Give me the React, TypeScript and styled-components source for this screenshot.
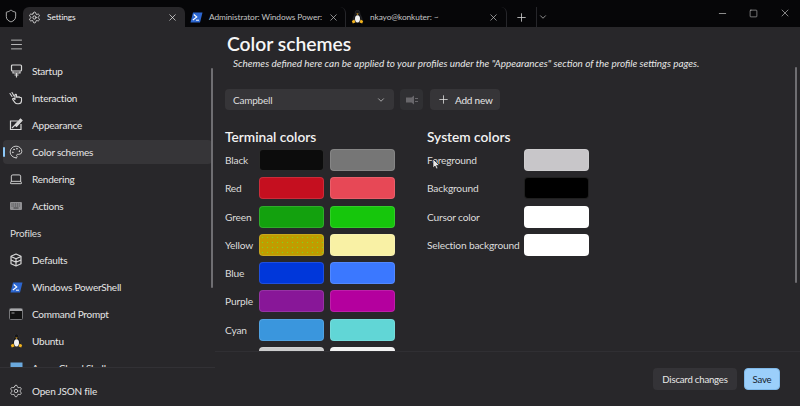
import React from "react";
import styled, { createGlobalStyle } from "styled-components";
import { ChevronDown, Laptop, Menu, Minus, Palette, Plus, Settings, Shield, Square, X } from "lucide-react";

const Global = createGlobalStyle`
  html, body { margin: 0; padding: 0; background: #28272a; }
  #root { width: 800px; height: 406px; }
  * { box-sizing: border-box; }
`;

const Page = styled.div`
  width: 800px; height: 406px; display: flex; flex-direction: column; overflow: hidden; position: relative;
  background: #28272a; color: #e4e4e4; font-family: Lato, "Noto Sans", sans-serif; font-size: 10px; letter-spacing: -0.22px;
`;
const TitleBar = styled.header`
  height: 27px; flex: none; display: flex; background: #060608;
`;
const ShieldSlot = styled.div`
  width: 23px; padding-top: 9px; padding-left: 4px; color: #cfcfcf; display: flex; align-items: flex-start;
`;
const Tabs = styled.div`
  display: flex; align-items: flex-end; height: 27px;
`;
const Tab = styled.div<{ $active?: boolean }>`
  width: ${p => (p.$active ? 162 : 161)}px; height: 20px; display: flex; align-items: center; padding: 0 7px 0 5px; gap: 6px;
  background: ${p => (p.$active ? "#28272a" : "transparent")}; border-radius: 6px 6px 0 0;
  color: ${p => (p.$active ? "#f0f0f0" : "#c4c4c4")};
  border-right: ${p => (p.$active ? "none" : "1px solid #26262a")};
  svg { flex: none; }
`;
const TabText = styled.span`
  flex: 1; white-space: nowrap; font-size: 8.3px; letter-spacing: -0.1px;
`;
const TabAction = styled.div<{ $divider?: boolean }>`
  height: 20px; display: flex; align-items: center; justify-content: center; width: ${p => (p.$divider ? 30 : 12)}px; color: #d0d0d0;
  border-right: ${p => (p.$divider ? "1px solid #26262a" : "none")};
`;
const WindowControls = styled.div`
  margin-left: auto; display: flex; height: 27px; color: #d6d6d6;
`;
const WindowButton = styled.div`
  width: 31px; height: 26px; display: flex; align-items: center; justify-content: center;
`;
const Body = styled.div`
  flex: 1; display: flex; min-height: 0;
`;
const Sidebar = styled.nav`
  width: 215px; flex: none; display: flex; flex-direction: column; position: relative;
`;
const NavList = styled.div`
  height: 340px; flex: none; overflow: hidden; padding: 5px 3px 0; display: flex; flex-direction: column; gap: 3px;
`;
const NavItem = styled.div<{ $active?: boolean }>`
  height: 24px; flex: none; display: flex; align-items: center; gap: 8px; padding-left: 5px; border-radius: 4px; position: relative; width: 209px;
  background: ${p => (p.$active ? "#363538" : "transparent")}; color: #e6e6e6; white-space: nowrap;
  svg { flex: none; }
  &::before {
    content: ""; display: ${p => (p.$active ? "block" : "none")}; position: absolute; left: 0; top: 7px; width: 2px; height: 10px; border-radius: 1px; background: #8cc8f8;
  }
`;
const IconSlot = styled.span`
  width: 16px; height: 16px; flex: none; display: flex; align-items: center; justify-content: center; color: #d8d8d8;
`;
const SectionLabel = styled.div`
  height: 24px; flex: none; display: flex; align-items: center; padding-left: 7px; color: #dcdcdc;
`;
const SideFooter = styled.div`
  border-top: 1px solid #323135; padding: 11px 3px 0;
`;
const ScrollThumb = styled.div<{ $top: number; $height: number; $left: number }>`
  position: absolute; left: ${p => p.$left}px; top: ${p => p.$top}px; width: 2px; height: ${p => p.$height}px; border-radius: 1px; background: #6f6e72;
`;
const Main = styled.main`
  flex: 1; display: flex; flex-direction: column; min-width: 0;
`;
const Content = styled.div`
  height: 325px; flex: none; overflow: hidden; padding: 5px 0 0 10px; border-bottom: 1px solid #302f33;
`;
const Title = styled.h1`
  margin: 0 0 0 2px; font-size: 19.3px; line-height: 24px; font-weight: 600; letter-spacing: 0; color: #f6f6f6;
`;
const Subtitle = styled.p`
  margin: 0 0 0 8px; font-size: 9.95px; line-height: 14px; font-style: italic; letter-spacing: 0; color: #e6e6e6; white-space: nowrap;
`;
const Toolbar = styled.div`
  display: flex; margin-top: 19px; height: 21px; gap: 6px;
`;
const Combo = styled.div`
  width: 169px; display: flex; align-items: center; justify-content: space-between; padding: 0 8px; background: #363538; border-radius: 4px; color: #dedede;
`;
const IconButton = styled.div`
  width: 23px; display: flex; align-items: center; justify-content: center; background: #303033; border-radius: 4px; color: #68676b;
`;
const AddButton = styled.div`
  width: 70px; margin-left: 1px; display: flex; align-items: center; gap: 5px; padding-left: 7px; background: #363538; border-radius: 4px; color: #e6e6e6;
`;
const Columns = styled.div`
  display: flex; gap: 32px; margin-top: 18px;
`;
const Column = styled.section`
  display: flex; flex-direction: column;
`;
const ColumnTitle = styled.h2`
  margin: 0 0 3px; font-size: 13.7px; line-height: 18px; font-weight: 600; letter-spacing: 0; color: #f2f2f2;
`;
const SwatchGrid = styled.div<{ $cols: string }>`
  display: grid; grid-template-columns: ${p => p.$cols}; column-gap: 6px; row-gap: 6.3px; align-items: center;
`;
const RowLabel = styled.span`
  font-size: 10.2px; letter-spacing: -0.18px; color: #dcdcdc; white-space: nowrap; margin-right: -6px;
`;
const Swatch = styled.div<{ $color: string; $speck?: string }>`
  width: 65px; height: 22px; border-radius: 4px; border: 1px solid rgba(255,255,255,0.12);
  background-color: ${p => p.$color};
  background-image: ${p => (p.$speck ? `radial-gradient(${p.$speck} 0.6px, transparent 0.9px)` : "none")};
  background-size: 5px 5px;
`;
const Footer = styled.footer`
  flex: 1; display: flex; justify-content: flex-end; align-items: flex-start; gap: 7px; padding: 16px 20px 0 0;
`;
const Discard = styled.button`
  width: 84px; height: 22px; border: none; border-radius: 4px; background: #343337; color: #e8e8e8; font: inherit; letter-spacing: -0.2px; font-size: 9.6px; padding: 0;
`;
const Save = styled.button`
  width: 36px; height: 22px; border: 1px solid #7fb8e8; border-radius: 4px; background: #9bcffb; color: #14202c; font: inherit; letter-spacing: -0.2px; font-size: 9.6px; padding: 0;
`;
const Pointer = styled.svg`
  position: absolute; left: 432px; top: 159px;
`;

const StartupIcon = () => (
  <svg width="13" height="14" viewBox="0 0 13 14" fill="none" stroke="currentColor" strokeWidth="1.2">
    <rect x="1.5" y="1" width="10" height="6" rx="1" />
    <path d="M3 7.5v1.5h7V7.5M6.5 9v4.5M4.5 11h4" />
  </svg>
);
const HandIcon = () => (
  <svg width="14" height="14" viewBox="0 0 14 14" fill="none" stroke="currentColor" strokeWidth="1.1" strokeLinecap="round" strokeLinejoin="round">
    <path d="M1 2.500l2 3M3 1.500l2 3.500M6 4v4.500L4.800 7.500c-.8-.5-1.700.3-1 1.200L6 11.600c.6.8 1.400 1.200 2.500 1.200h1c1.700 0 3-1.300 3-3V7.500c0-.9-.9-1.300-1.500-.8-.2-1-1.500-1.200-2-.3-.3-.7-1.200-.7-1.500-.2V4c0-1-1.500-1-1.500 0z" />
  </svg>
);
const AppearanceIcon = () => (
  <svg width="14" height="14" viewBox="0 0 14 14" fill="none" stroke="currentColor" strokeWidth="1.2">
    <path d="M9 3H1.500v8.500H12V6" />
    <path d="M3 10l3-3 1.500 1.500L13 2.500 11.500 1 6 7" fill="currentColor" />
  </svg>
);
const KeyboardIcon = () => (
  <svg width="14" height="12" viewBox="0 0 14 12">
    <rect x="1" y="2" width="12" height="8" rx="1" fill="#8f8f92" />
    <path d="M2.500 4h9M2.500 6h9" stroke="#3a3a3d" strokeWidth="0.9" strokeDasharray="1 .8" />
    <path d="M4.500 8h5" stroke="#3a3a3d" strokeWidth="1" />
  </svg>
);
const DefaultsIcon = () => (
  <svg width="14" height="14" viewBox="0 0 14 14" fill="none" stroke="currentColor" strokeWidth="1.2" strokeLinejoin="round">
    <path d="M7 1l5 2.200v7.600L7 13l-5-2.200V3.200z" />
    <path d="M2 3.500l5 2.200 5-2.200M2 7l5 2.200L12 7M7 5.700V13" />
  </svg>
);
const PowerShellIcon = () => (
  <svg width="13" height="11" viewBox="0 0 13 11">
    <path d="M3 .5h9.500L10 10.500H.5z" fill="#2c66cf" />
    <path d="M3.800 2.500L6.800 5 2.800 8" fill="none" stroke="#fff" strokeWidth="1.100" />
    <path d="M6 8.200h3" stroke="#fff" strokeWidth="1" />
  </svg>
);
const CmdIcon = () => (
  <svg width="14" height="12" viewBox="0 0 14 12">
    <rect x=".5" y=".5" width="13" height="11" rx="1" fill="#111" stroke="#77777a" />
    <rect x="1" y="1" width="12" height="2" fill="#a8a8ab" />
    <path d="M2.500 5h3" stroke="#bbb" strokeWidth=".8" />
  </svg>
);
const Penguin = () => (
  <svg width="13" height="14" viewBox="0 0 13 14">
    <path d="M6.500 0C4.800 0 4.300 1.500 4.300 3c0 1.500-2.300 4-2.300 6.500 0 1.500 2 3 4.500 3s4.500-1.500 4.500-3C11 7 8.700 4.500 8.700 3 8.700 1.500 8.200 0 6.500 0z" fill="#17171a" stroke="#55555a" strokeWidth=".3" />
    <ellipse cx="6.500" cy="8.800" rx="2.500" ry="3.600" fill="#f1f1f1" />
    <path d="M5.300 3.600h2.400L6.500 4.900z" fill="#f0b020" />
    <path d="M.8 11l2.600-1.400 1 2.900-2.600 1zM12.200 11L9.600 9.600l-1 2.900 2.600 1z" fill="#f2b31d" />
  </svg>
);
const CloudIcon = () => (
  <svg width="13" height="12" viewBox="0 0 13 12">
    <rect x=".5" y=".5" width="12" height="11" fill="#6aa8dc" />
  </svg>
);
const SpeakerIcon = () => (
  <svg width="12" height="10" viewBox="0 0 12 10" fill="currentColor">
    <path d="M0 2.500h5.500L8 .5v9L5.500 7.500H0z" />
    <path d="M9 3h3v1H9zM9 6h3v1H9z" />
  </svg>
);

const nav: [string, React.ReactNode][] = [
  ["Startup", <StartupIcon />],
  ["Interaction", <HandIcon />],
  ["Appearance", <AppearanceIcon />],
];
const nav2: [string, React.ReactNode][] = [
  ["Rendering", <Laptop size={14} strokeWidth={1.6} />],
  ["Actions", <KeyboardIcon />],
];
const profiles: [string, React.ReactNode][] = [
  ["Defaults", <DefaultsIcon />],
  ["Windows PowerShell", <PowerShellIcon />],
  ["Command Prompt", <CmdIcon />],
  ["Ubuntu", <Penguin />],
  ["Azure Cloud Shell", <CloudIcon />],
];
const terminal: [string, string, string, string?][] = [
  ["Black", "#0c0c0c", "#767676"],
  ["Red", "#c50f1f", "#e74856"],
  ["Green", "#13a10e", "#16c60c"],
  ["Yellow", "#c19c00", "#f9f1a5", "#7fd81c"],
  ["Blue", "#0037da", "#3b78ff"],
  ["Purple", "#881798", "#b4009e"],
  ["Cyan", "#3a96dd", "#61d6d6"],
  ["White", "#cccccc", "#f2f2f2"],
];
const system: [string, string][] = [
  ["Foreground", "#c8c6c9"],
  ["Background", "#000000"],
  ["Cursor color", "#ffffff"],
  ["Selection background", "#ffffff"],
];

const NavRow = ({ label, icon, active }: { label: string; icon: React.ReactNode; active?: boolean }) => (
  <NavItem $active={active}>
    <IconSlot>{icon}</IconSlot>
    {label}
  </NavItem>
);

export default function App() {
  return (
    <Page>
      <Global />
      <TitleBar>
        <ShieldSlot><Shield size={14} strokeWidth={1.4} /></ShieldSlot>
        <Tabs>
          <Tab $active>
            <Settings size={13} strokeWidth={1.5} />
            <TabText>Settings</TabText>
            <X size={11} strokeWidth={1.5} />
          </Tab>
          <Tab>
            <PowerShellIcon />
            <TabText>Administrator: Windows Power:</TabText>
            <X size={11} strokeWidth={1.5} />
          </Tab>
          <Tab>
            <Penguin />
            <TabText>nkayo@konkuter: ~</TabText>
            <X size={11} strokeWidth={1.5} />
          </Tab>
          <TabAction $divider><Plus size={13} strokeWidth={1.5} /></TabAction>
          <TabAction><ChevronDown size={10} strokeWidth={1.6} /></TabAction>
        </Tabs>
        <WindowControls>
          <WindowButton><Minus size={11} strokeWidth={1.4} /></WindowButton>
          <WindowButton><Square size={9} strokeWidth={1.4} /></WindowButton>
          <WindowButton><X size={12} strokeWidth={1.2} /></WindowButton>
        </WindowControls>
      </TitleBar>
      <Body>
        <Sidebar>
          <NavList>
            <NavItem><IconSlot><Menu size={15} strokeWidth={1.3} /></IconSlot></NavItem>
            {nav.map(([l, i]) => <NavRow key={l} label={l} icon={i} />)}
            <NavRow label="Color schemes" icon={<Palette size={14} strokeWidth={1.5} />} active />
            {nav2.map(([l, i]) => <NavRow key={l} label={l} icon={i} />)}
            <SectionLabel>Profiles</SectionLabel>
            {profiles.map(([l, i]) => <NavRow key={l} label={l} icon={i} />)}
          </NavList>
          <SideFooter>
            <NavRow label="Open JSON file" icon={<Settings size={14} strokeWidth={1.4} />} />
          </SideFooter>
          <ScrollThumb $left={211} $top={41} $height={220} />
        </Sidebar>
        <Main>
          <Content>
            <Title>Color schemes</Title>
            <Subtitle>Schemes defined here can be applied to your profiles under the "Appearances" section of the profile settings pages.</Subtitle>
            <Toolbar>
              <Combo>Campbell<ChevronDown size={10} strokeWidth={1.6} /></Combo>
              <IconButton><SpeakerIcon /></IconButton>
              <AddButton><Plus size={13} strokeWidth={1.4} />Add new</AddButton>
            </Toolbar>
            <Columns>
              <Column>
                <ColumnTitle>Terminal colors</ColumnTitle>
                <SwatchGrid $cols="28px 65px 65px">
                  {terminal.map(([name, a, b, speck]) => (
                    <React.Fragment key={name}>
                      <RowLabel>{name}</RowLabel>
                      <Swatch $color={a} $speck={speck} />
                      <Swatch $color={b} />
                    </React.Fragment>
                  ))}
                </SwatchGrid>
              </Column>
              <Column>
                <ColumnTitle>System colors</ColumnTitle>
                <SwatchGrid $cols="91px 65px">
                  {system.map(([name, c]) => (
                    <React.Fragment key={name}>
                      <RowLabel>{name}</RowLabel>
                      <Swatch $color={c} />
                    </React.Fragment>
                  ))}
                </SwatchGrid>
              </Column>
            </Columns>
          </Content>
          <Footer>
            <Discard>Discard changes</Discard>
            <Save>Save</Save>
          </Footer>
        </Main>
      </Body>
      <ScrollThumb $left={795} $top={67} $height={216} />
      <Pointer width="8" height="11" viewBox="0 0 8 11">
        <path d="M1 0v9l2-2 1.500 3 1.500-.7L4.600 6.500H7.500z" fill="#e8e8e8" stroke="#111" strokeWidth=".6" />
      </Pointer>
    </Page>
  );
}
